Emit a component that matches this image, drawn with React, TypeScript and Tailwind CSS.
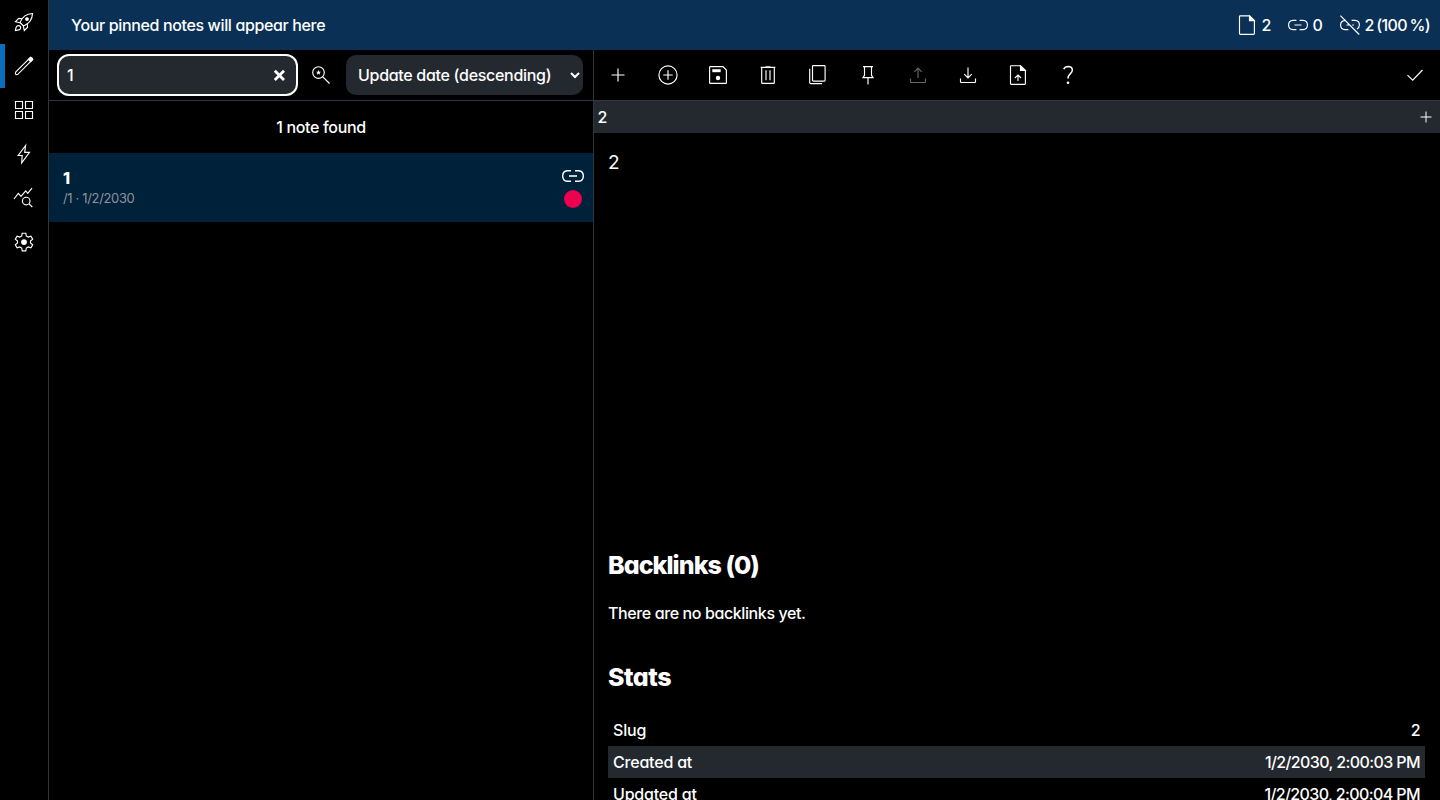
import type { ReactNode } from "react";

type IconProps = { children: ReactNode; className?: string };

function Icon({ children, className = "" }: IconProps) {
  return (
    <svg
      viewBox="0 0 24 24"
      className={`size-6 shrink-0 ${className}`}
      fill="none"
      stroke="currentColor"
      strokeWidth="1.15"
    >
      {children}
    </svg>
  );
}

const navIcons: { name: string; icon: ReactNode }[] = [
  {
    name: "launch",
    icon: (
      <Icon>
        <path d="M8 12.5C9.8 8 13.7 3.7 20.5 3.5C20.3 10.3 16 14.2 11.5 16Z" />
        <path d="M10.2 8.8L6.8 8.4L3.5 11.7L8 12.7M15.2 13.8L15.6 17.2L12.3 20.5L11.3 15.9" />
        <circle cx="15" cy="9" r="1.3" fill="currentColor" />
        <path d="M4.7 16.4C6 15.2 8 15.5 8.5 16.8C9 18.2 8.3 19.6 6.8 19.9L3.4 20.6C3.6 19 3.7 17.4 4.7 16.4Z" />
      </Icon>
    ),
  },
  {
    name: "editor",
    icon: (
      <Icon>
        <path d="M3.6 18.2L18.2 3.6Q19 3 19.8 3.8L20.2 4.2Q21 5 20.3 5.8L5.8 20.3L4.2 20.6L3.4 19.8Z" />
        <path d="M16.4 5.4L18.6 3.3L20.7 5.4L18.6 7.6Z" fill="currentColor" />
      </Icon>
    ),
  },
  {
    name: "grid",
    icon: (
      <Icon>
        <path d="M3.5 3.5h7v7h-7zM13.5 3.5h7v7h-7zM3.5 13.5h7v7h-7zM13.5 13.5h7v7h-7z" />
      </Icon>
    ),
  },
  {
    name: "actions",
    icon: (
      <Icon>
        <path d="M13.6 3.5L6.2 13.5H10.2L9.7 20.8L17.5 10.3H12.7Z" />
      </Icon>
    ),
  },
  {
    name: "stats",
    icon: (
      <Icon>
        <path d="M2 13L6.3 7.4L9 10.4L13.7 4.8L15.8 7.4L20 2.2" />
        <circle cx="14.2" cy="15" r="3.8" />
        <path d="M17 17.8L20.3 21" />
      </Icon>
    ),
  },
  {
    name: "settings",
    icon: (
      <Icon>
        <path d="M10.2 3.2H13.8L14.3 6L16.2 7.1L18.9 6.1L20.7 9.2L18.5 11V13L20.7 14.8L18.9 17.9L16.2 16.9L14.3 18L13.8 20.8H10.2L9.7 18L7.8 16.9L5.1 17.9L3.3 14.8L5.5 13V11L3.3 9.2L5.1 6.1L7.8 7.1L9.7 6Z" />
        <circle cx="12" cy="12" r="2.3" fill="currentColor" />
      </Icon>
    ),
  },
];

const tools: { name: string; disabled?: boolean; icon: ReactNode }[] = [
  { name: "new", icon: <Icon><path d="M12 5.5v13M5.5 12h13" /></Icon> },
  {
    name: "create-linked",
    icon: <Icon><circle cx="12" cy="12" r="9.1" /><path d="M12 7.3v9.4M7.3 12h9.4" /></Icon>,
  },
  {
    name: "save",
    icon: (
      <Icon>
        <path d="M4.2 3.6H16.9L20.4 7.1V19.8Q20.4 20.4 19.8 20.4H4.2Q3.6 20.4 3.6 19.8V4.2Q3.6 3.6 4.2 3.6Z" />
        <path d="M6.3 6.2h8.4v3H6.3z" fill="currentColor" stroke="none" />
        <circle cx="12" cy="15" r="2.2" fill="currentColor" stroke="none" />
      </Icon>
    ),
  },
  {
    name: "delete",
    icon: (
      <Icon>
        <path d="M4.7 4.4H19.3M9.5 3.8h5M5.7 4.5V19.7Q5.7 20.4 6.4 20.4H17.6Q18.3 20.4 18.3 19.7V4.5M10 7.2v10M14 7.2v10" />
      </Icon>
    ),
  },
  {
    name: "duplicate",
    icon: (
      <Icon>
        <rect x="6.5" y="2.6" width="12.6" height="15.5" rx=".8" />
        <path d="M3.7 5.8V19.7Q3.7 20.6 4.6 20.6H16" />
      </Icon>
    ),
  },
  {
    name: "pin",
    icon: (
      <Icon>
        <path d="M7 3.6H17M8.5 3.6V12.3L7 14.6H17L15.5 12.3V3.6M12 14.6V21.5" />
      </Icon>
    ),
  },
  {
    name: "upload",
    disabled: true,
    icon: <Icon><path d="M12 15V5.2M8.3 8.8L12 5.1L15.7 8.8M4.5 15.5V18.8Q4.5 19.5 5.2 19.5H18.8Q19.5 19.5 19.5 18.8V15.5" /></Icon>,
  },
  {
    name: "download",
    icon: <Icon><path d="M12 4.5V15M8.3 11.2L12 14.9L15.7 11.2M4.5 15.5V18.8Q4.5 19.5 5.2 19.5H18.8Q19.5 19.5 19.5 18.8V15.5" /></Icon>,
  },
  {
    name: "import",
    icon: (
      <Icon>
        <path d="M5.2 2.7H14.6L19.4 7.5V20.6Q19.4 21.3 18.7 21.3H5.2Q4.5 21.3 4.5 20.6V3.4Q4.5 2.7 5.2 2.7Z" />
        <path d="M14.5 3V7.5H19.2Z" fill="currentColor" />
        <path d="M12 18V12.3M8.9 15L12 12L15.1 15" />
      </Icon>
    ),
  },
  {
    name: "help",
    icon: (
      <Icon>
        <path d="M7.7 6.1Q9 3.4 12.1 3.4Q16.4 3.6 16.4 7.1Q16.4 8.9 14.2 10.9Q12 12.8 12 15.5" strokeWidth="1.5" />
        <circle cx="12" cy="19.7" r="1.3" fill="currentColor" stroke="none" />
      </Icon>
    ),
  },
];

const stats = [
  { label: "Slug", value: "2" },
  { label: "Created at", value: "1/2/2030, 2:00:03 PM" },
  { label: "Updated at", value: "1/2/2030, 2:00:04 PM" },
];

function Sidebar() {
  return (
    <nav className="flex w-[49px] shrink-0 flex-col border-r border-[#30363d]">
      {navIcons.map(({ name, icon }) => (
        <button
          key={name}
          aria-label={name}
          className={
            name === "editor"
              ? "flex h-11 items-center border-l-[5px] border-[#0a6ebd] pl-[7px]"
              : "flex h-11 items-center pl-3"
          }
        >
          {icon}
        </button>
      ))}
    </nav>
  );
}

function Header() {
  return (
    <header className="flex h-[50px] shrink-0 items-center bg-[#0a3055] pr-[10px] pl-[22px]">
      <span className="tracking-[-0.36px]">Your pinned notes will appear here</span>
      <div className="ml-auto flex items-center">
        <Icon>
          <path d="M5.2 2.8H14.6L19.4 7.6V20.5Q19.4 21.3 18.6 21.3H5.2Q4.5 21.3 4.5 20.5V3.5Q4.5 2.8 5.2 2.8Z" />
          <path d="M14.5 3V7.6H19.2Z" fill="currentColor" />
        </Icon>
        <span className="ml-[3px] w-[10px]">2</span>
        <Icon className="ml-[14px]">
          <path d="M10.4 7.4H7Q2.6 7.6 2.6 12T7 16.6H10.4M13.6 7.4H17Q21.4 7.6 21.4 12T17 16.6H13.6M8.5 12H15.5" />
        </Icon>
        <span className="ml-[3px] w-[10px]">0</span>
        <Icon className="ml-[15px]">
          <path d="M7.5 7.4Q2.6 7.7 2.6 12T7 16.6H10.4M13.6 7.4H17Q21.4 7.6 21.4 12Q21.4 14.6 19 16M8.5 12H11.5M14.2 12H15.8M2.4 2.6L21.2 21.5" />
        </Icon>
        <span className="ml-[3px] tracking-[-0.6px] [word-spacing:-1.3px]">2 (100 %)</span>
      </div>
    </header>
  );
}

function NoteList() {
  return (
    <section className="flex w-[545px] shrink-0 flex-col border-r border-[#30363d]">
      <div className="flex h-[51px] shrink-0 items-center border-b border-[#30363d] pl-2">
        <div className="flex h-[42px] w-[241px] items-center rounded-xl border-2 border-white bg-[#24292f] pr-[11px] pl-[8px]">
          <input
            className="min-w-0 flex-1 bg-transparent outline-none"
            defaultValue="1"
            aria-label="Search"
          />
          <svg viewBox="0 0 12 12" className="size-3" stroke="currentColor" strokeWidth="2.8">
            <path d="M1.8 1.8L11 11M11 1.8L1.8 11" />
          </svg>
        </div>
        <Icon className="ml-[11px]">
          <circle cx="9.5" cy="9.5" r="5.8" />
          <path d="M13.8 13.8L20.5 20.5" />
          <path d="M9.5 7L10.2 8.7L12 8.8L10.6 10L11.1 11.8L9.5 10.8L7.9 11.8L8.4 10L7 8.8L8.8 8.7Z" fill="currentColor" stroke="none" />
        </Icon>
        <button className="ml-[13px] flex h-10 w-[237px] items-center rounded-[10px] bg-[#24292f] pr-[3px] pl-3">
          <span className="whitespace-nowrap tracking-[-0.3px]">Update date (descending)</span>
          <svg viewBox="0 0 10 10" className="ml-auto size-[10px]" fill="none" stroke="currentColor" strokeWidth="2">
            <path d="M1 3L5 7L9 3" />
          </svg>
        </button>
      </div>
      <p className="flex h-[52px] shrink-0 items-center justify-center tracking-[-0.33px]">1 note found</p>
      <article className="flex h-[69px] shrink-0 justify-between bg-[#00213a] pr-2 pl-[14px]">
        <div className="pt-[14px]">
          <h3 className="leading-[22px] font-extrabold">1</h3>
          <p className="text-[13px] leading-[19px] font-normal tracking-[-0.35px] text-[#8b949e]">/1 · 1/2/2030</p>
        </div>
        <div className="flex flex-col items-center pt-[11px]">
          <Icon>
            <path d="M10 6.7H6.2Q1.7 7 1.7 12T6.2 17.2H10M14 6.7H17.8Q22.3 7 22.3 12T17.8 17.2H14" strokeWidth="1.4" />
            <path d="M8 12H16" strokeWidth="2" stroke="#c4cbd2" />
          </Icon>
          <span className="mt-[2px] size-[18px] rounded-full bg-[#ee0050]" />
        </div>
      </article>
    </section>
  );
}

function Editor() {
  return (
    <section className="flex min-w-0 flex-1 flex-col">
      <div className="flex h-[51px] shrink-0 items-center border-b border-[#30363d] pr-[13px]">
        {tools.map(({ name, disabled, icon }) => (
          <button
            key={name}
            aria-label={name}
            disabled={disabled}
            className="-ml-px mr-px flex h-[50px] w-[50px] items-center justify-center disabled:opacity-40"
          >
            {icon}
          </button>
        ))}
        <Icon className="ml-auto"><path d="M4.5 12.2L9.7 17.2L19.5 7" /></Icon>
      </div>
      <div className="flex h-8 shrink-0 items-center justify-between bg-[#24292f] pr-[8px] pl-[3.5px]">
        <span>2</span>
        <svg viewBox="0 0 12 12" className="size-3" stroke="currentColor" strokeWidth="1">
          <path d="M6 .5v11M.5 6h11" />
        </svg>
      </div>
      <div className="flex min-h-0 flex-1 flex-col overflow-hidden pr-[15px] pl-[14px]">
        <p className="h-[412px] shrink-0 pt-[15px] text-[19px] leading-[29px] font-normal">2</p>
        <h2 className="h-[56px] shrink-0 text-[25px] leading-[41px] font-extrabold tracking-[-0.95px]">Backlinks (0)</h2>
        <p className="h-[56px] shrink-0 leading-6 tracking-[-0.39px]">There are no backlinks yet.</p>
        <h2 className="h-[57px] shrink-0 text-[25px] leading-[41px] font-extrabold tracking-[-0.5px]">Stats</h2>
        <dl>
          {stats.map(({ label, value }) => (
            <div key={label} className="flex h-8 items-center justify-between px-[5px] even:bg-[#24292f]">
              <dt className="tracking-[-0.2px]">{label}</dt>
              <dd className="tracking-[-0.6px]">{value}</dd>
            </div>
          ))}
        </dl>
      </div>
    </section>
  );
}

export default function App() {
  return (
    <div className="flex h-[800px] w-[1440px] overflow-hidden bg-black font-['Inter',sans-serif] text-base font-medium text-white [font-feature-settings:'cv11']">
      <Sidebar />
      <div className="flex min-w-0 flex-1 flex-col">
        <Header />
        <main className="flex min-h-0 flex-1">
          <NoteList />
          <Editor />
        </main>
      </div>
    </div>
  );
}
